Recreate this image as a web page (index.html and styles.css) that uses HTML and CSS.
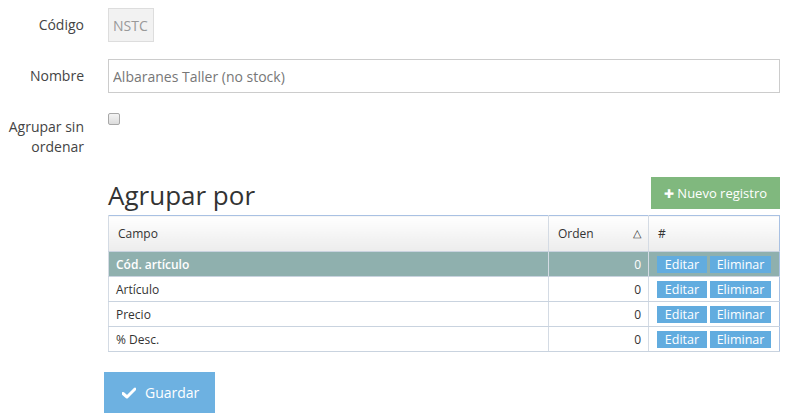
FILE: index.html
```html
<!doctype html>
<html lang="es">
  <head>
    <meta charset="utf-8">
    <title>Agrupación</title>
    <link rel="stylesheet" href="styles.css">
  </head>
  <body>
    <div id="main">
      <div class="formRow">
        <label class="lbl">Código</label>
        <div class="field">
          <input class="txt codeTxt" type="text" value="NSTC" disabled>
        </div>
      </div>

      <div class="formRow">
        <label class="lbl">Nombre</label>
        <div class="field">
          <input class="txt" type="text" value="Albaranes Taller (no stock)">
        </div>
      </div>

      <div class="formRow checkRow">
        <label class="lbl lblTall">Agrupar sin ordenar</label>
        <div class="field">
          <input class="check" type="checkbox">
        </div>
      </div>

      <div class="group">
        <div class="groupHead">
          <h2 class="groupTitle">Agrupar por</h2>
          <button class="btnNew"><span class="plus">&#10010;</span> Nuevo registro</button>
        </div>

        <table class="grid">
          <tr>
            <th class="colCampo">Campo</th>
            <th class="colOrden">Orden <span class="sortMark">&#9651;</span></th>
            <th class="colAcc">#</th>
          </tr>
          <tr class="selected">
            <td>Cód. artículo</td>
            <td class="num">0</td>
            <td class="acc"><button class="btnSm btnEdit">Editar</button><button class="btnSm btnDel">Eliminar</button></td>
          </tr>
          <tr>
            <td>Artículo</td>
            <td class="num">0</td>
            <td class="acc"><button class="btnSm btnEdit">Editar</button><button class="btnSm btnDel">Eliminar</button></td>
          </tr>
          <tr>
            <td>Precio</td>
            <td class="num">0</td>
            <td class="acc"><button class="btnSm btnEdit">Editar</button><button class="btnSm btnDel">Eliminar</button></td>
          </tr>
          <tr>
            <td>% Desc.</td>
            <td class="num">0</td>
            <td class="acc"><button class="btnSm btnEdit">Editar</button><button class="btnSm btnDel">Eliminar</button></td>
          </tr>
        </table>
      </div>

      <button class="btnSave">
        <svg class="tick" width="14" height="12" viewBox="0 0 14 12">
          <path d="M1 6.5 L5 10 L13 2" fill="none" stroke="white" stroke-width="3" stroke-linecap="round" stroke-linejoin="round"/>
        </svg>
        Guardar
      </button>
    </div>
  </body>
</html>
```

FILE: styles.css
```css
body {
  margin: 0;
  background-color: #ffffff;
  font-family: "Open Sans", "Liberation Sans", sans-serif;
  color: #333333;
}

#main {
  padding: 8px 6px 0 0;
}

.formRow {
  display: grid;
  grid-template-columns: 84px 1fr;
  column-gap: 24px;
  margin-bottom: 17px;
}

.lbl {
  font-size: 14px;
  line-height: 34px;
  text-align: right;
  color: #444444;
}

.lblTall {
  line-height: 20px;
  padding-top: 9px;
}

.checkRow {
  margin-top: -2px;
  margin-bottom: 0;
}

.txt {
  box-sizing: border-box;
  width: 100%;
  height: 34px;
  padding: 0 4px;
  border: 1px solid #cccccc;
  font-family: "Open Sans", "Liberation Sans", sans-serif;
  font-size: 14px;
  color: #777777;
  background-color: #ffffff;
}

.codeTxt {
  width: 46px;
  background-color: #f2f2f2;
  color: #999999;
  border-color: #dddddd;
}

.check {
  appearance: none;
  width: 12px;
  height: 12px;
  margin: 4px 0 0 0;
  border: 1px solid #a8a8a8;
  border-radius: 2px;
  background: linear-gradient(#f4f4f4, #dcdcdc);
}

.group {
  margin: 20px 0 0 108px;
}

.groupHead {
  display: flex;
  justify-content: space-between;
  align-items: flex-start;
  margin-bottom: 5px;
}

.groupTitle {
  margin: 0;
  padding-top: 3px;
  font-size: 26px;
  line-height: 30px;
  font-weight: normal;
  color: #333333;
}

.btnNew {
  height: 32px;
  width: 129px;
  border: none;
  background-color: #80b87e;
  color: #ffffff;
  font-family: "Open Sans", "Liberation Sans", sans-serif;
  font-size: 13px;
  padding: 0;
}

.plus {
  font-size: 12px;
}

.grid {
  width: 100%;
  border-collapse: collapse;
  border: 1px solid #a9c1e3;
  font-size: 12px;
}

.grid th {
  height: 35px;
  padding: 0 0 0 9px;
  text-align: left;
  font-weight: normal;
  color: #333333;
  background: linear-gradient(#ffffff, #ececec);
  border-left: 1px solid #d4dbe4;
  border-bottom: 1px solid #c9d3df;
}

.colOrden {
  width: 90px;
}

.colAcc {
  width: 121px;
}

.sortMark {
  float: right;
  margin-right: 7px;
  font-size: 11px;
}

.grid td {
  height: 24px;
  padding: 0 7px;
  border-left: 1px solid #d4dbe4;
  border-bottom: 1px solid #c9d3df;
  color: #333333;
}

.grid .num {
  text-align: right;
}

.grid .acc {
  padding: 0 0 0 8px;
  white-space: nowrap;
}

.selected td {
  background-color: #8fb0ae;
  color: #ffffff;
  font-weight: 600;
}

.selected .num {
  font-weight: normal;
}

.btnSm {
  height: 17px;
  padding: 0;
  border: none;
  background-color: #62acdf;
  color: #ffffff;
  font-family: "Open Sans", "Liberation Sans", sans-serif;
  font-size: 12.5px;
  line-height: 17px;
  vertical-align: middle;
}

.btnEdit {
  width: 50px;
}

.btnDel {
  width: 61px;
  margin-left: 3px;
}

.btnSave {
  display: flex;
  align-items: center;
  gap: 9px;
  margin: 20px 0 0 104px;
  width: 111px;
  height: 41px;
  padding: 0 0 0 18px;
  border: none;
  background-color: #6db1e1;
  color: #ffffff;
  font-family: "Open Sans", "Liberation Sans", sans-serif;
  font-size: 14px;
}
```
